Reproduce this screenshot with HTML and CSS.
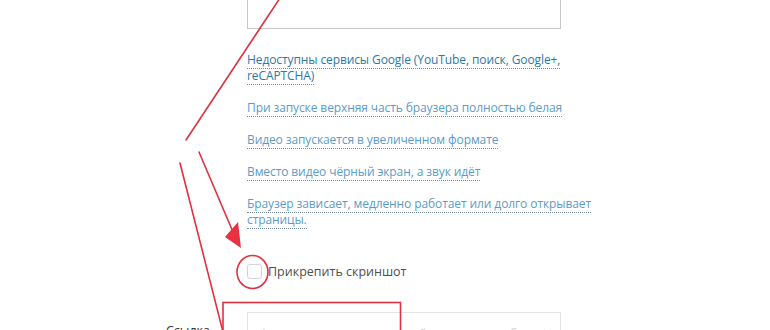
FILE: index.html
```html
<html>
<head>
    <meta charset="utf-8">
    <title>Сообщить о проблеме</title>
    <link rel="stylesheet" href="styles.css">
</head>
<body>
    <div class="page">
        <div class="form">
            <div class="label"></div>
            <div class="field">
                <div class="textarea"></div>
            </div>

            <div class="label"></div>
            <ul class="problems">
                <li><a class="problem current" href="#">Недоступны сервисы Google (YouTube, поиск, Google+, reCAPTCHA)</a></li>
                <li><a class="problem" href="#">При запуске верхняя часть браузера полностью белая</a></li>
                <li><a class="problem" href="#">Видео запускается в увеличенном формате</a></li>
                <li><a class="problem" href="#">Вместо видео чёрный экран, а звук идёт</a></li>
                <li><a class="problem" href="#">Браузер зависает, медленно работает или долго открывает страницы.</a></li>
            </ul>

            <div class="label"></div>
            <label class="attach">
                <span class="checkbox"></span>
                Прикрепить скриншот
            </label>

            <div class="label label-text">Ссылка</div>
            <div class="field">
                <div class="input">
                    <span class="placeholder">Адрес страницы, на которой возникла проблема</span>
                    <span class="clear">×</span>
                </div>
            </div>
        </div>

        <!-- пометки поверх скриншота -->
        <svg class="marks" width="770" height="330" viewBox="0 0 770 330">
            <g stroke="#e0313f" stroke-width="1.6" fill="none" stroke-linecap="round">
                <line x1="280" y1="-2" x2="186" y2="140"></line>
                <line x1="199" y1="152" x2="233" y2="232"></line>
                <line x1="180" y1="163" x2="223" y2="332"></line>
                <ellipse cx="252.5" cy="272" rx="15.5" ry="16.5"></ellipse>
                <rect x="223" y="302.5" width="177.5" height="40"></rect>
            </g>
            <polygon points="241,248 225,237 238,222" fill="#e8323f"></polygon>
        </svg>
    </div>
</body>
</html>
```

FILE: styles.css
```css
* {
    margin: 0;
    padding: 0;
    box-sizing: border-box;
}

body {
    background: #fff;
    font-family: "Open Sans", "Noto Sans", sans-serif;
    font-size: 12px;
    color: #555;
    overflow: hidden;
}

.page {
    position: relative;
    width: 770px;
    height: 330px;
    overflow: hidden;
}

.form {
    display: grid;
    grid-template-columns: 247px 360px;
    align-items: start;
}

.field {
    width: 314px;
}

.textarea {
    height: 60px;
    margin-top: -31px;
    border: 1px solid #c9c9c9;
    background: #fff;
}

.problems {
    list-style: none;
    padding-top: 23px;
    letter-spacing: -0.1px;
}

.problems li {
    line-height: 16px;
    margin-bottom: 16px;
}

.problems li:last-child {
    margin-bottom: 0;
}

.problem {
    color: #5a9cc8;
    text-decoration: none;
    border-bottom: 1px dotted #7590a5;
}

.problem.current {
    color: #2c78a6;
}

.attach {
    display: flex;
    align-items: center;
    gap: 6px;
    margin-top: 34px;
    height: 18px;
    color: #505050;
    font-size: 12.5px;
}

.checkbox {
    width: 15px;
    height: 15px;
    border: 1px solid #d3d3d3;
    border-radius: 3px;
    background: #fff;
}

.label-text {
    text-align: right;
    padding-right: 37px;
    padding-top: 43px;
    line-height: 16px;
    color: #333;
    font-size: 12.5px;
}

.input {
    display: flex;
    justify-content: space-between;
    align-items: center;
    gap: 10px;
    height: 42px;
    margin-top: 32px;
    padding: 0 8px 0 12px;
    border: 1px solid #e4e4e4;
    color: #cfcfcf;
}

.placeholder {
    min-width: 0;
    white-space: nowrap;
    overflow: hidden;
}

.clear {
    flex-shrink: 0;
    color: #d6d6d6;
    font-size: 16px;
}

.marks {
    position: absolute;
    left: 0;
    top: 0;
}
```
